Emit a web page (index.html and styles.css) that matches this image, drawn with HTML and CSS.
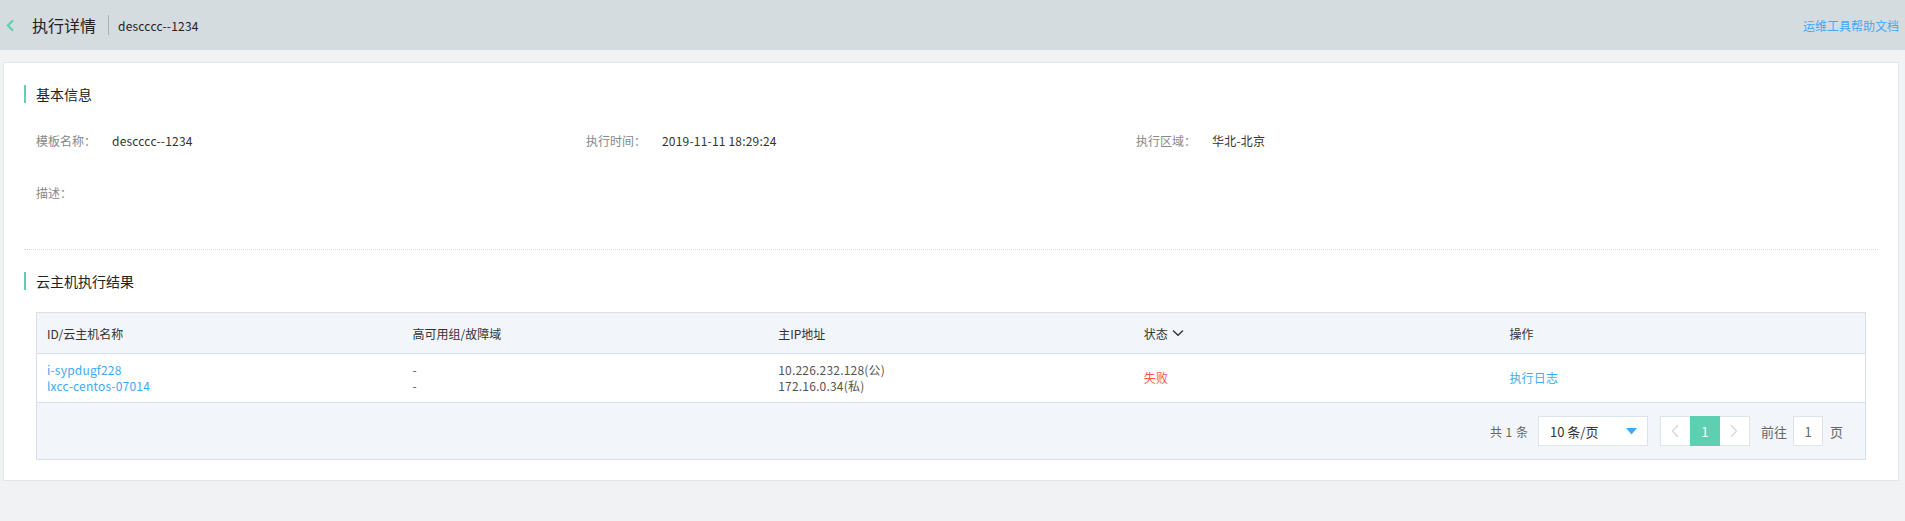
FILE: index.html
```html
<!DOCTYPE html>
<html lang="zh-CN">
<head>
<meta charset="utf-8">
<title>执行详情</title>
<link rel="stylesheet" href="styles.css">
</head>
<body>
<header class="topbar">
  <div class="topbar-left">
    <svg class="back" width="9" height="13" viewBox="0 0 9 13"><path d="M7 1.2 L2 6.5 L7 11.8" fill="none" stroke="#5dd0b2" stroke-width="2.2"/></svg>
    <h1 class="title">执行详情</h1>
    <span class="sep"></span>
    <span class="sub">descccc--1234</span>
  </div>
  <a class="help">运维工具帮助文档</a>
</header>

<main class="card">
  <div class="sec-title">基本信息</div>
  <div class="info-grid">
    <div class="info-item"><span class="info-label">模板名称：</span><span class="info-value">descccc--1234</span></div>
    <div class="info-item"><span class="info-label">执行时间：</span><span class="info-value">2019-11-11 18:29:24</span></div>
    <div class="info-item"><span class="info-label">执行区域：</span><span class="info-value">华北-北京</span></div>
    <div class="info-item"><span class="info-label">描述：</span><span class="info-value"></span></div>
  </div>
  <div class="divider"></div>
  <div class="sec-title sec-title-2">云主机执行结果</div>
  <div class="table-wrap">
    <table class="grid">
      <thead>
        <tr>
          <th>ID/云主机名称</th>
          <th>高可用组/故障域</th>
          <th>主IP地址</th>
          <th><span class="th-sort">状态<svg width="12" height="8" viewBox="0 0 12 8"><path d="M1 1.5 L6 6.3 L11 1.5" fill="none" stroke="#333" stroke-width="1.3"/></svg></span></th>
          <th>操作</th>
        </tr>
      </thead>
      <tbody>
        <tr>
          <td><a class="link">i-sypdugf228</a><br><a class="link">lxcc-centos-07014</a></td>
          <td class="muted">-<br>-</td>
          <td class="muted">10.226.232.128(公)<br>172.16.0.34(私)</td>
          <td><span class="fail">失败</span></td>
          <td><a class="link">执行日志</a></td>
        </tr>
      </tbody>
    </table>
    <div class="pager-bar">
      <span class="total">共 1 条</span>
      <div class="size-select"><span>10 条/页</span><svg width="11" height="7" viewBox="0 0 11 7"><path d="M0 0 H11 L5.5 6.5 Z" fill="#3fa9f5"/></svg></div>
      <div class="pager">
        <span class="pg-btn"><svg width="8" height="14" viewBox="0 0 8 14"><path d="M7 1 L1.5 7 L7 13" fill="none" stroke="#d3d7dc" stroke-width="1.2"/></svg></span>
        <span class="pg-btn pg-active">1</span>
        <span class="pg-btn"><svg width="8" height="14" viewBox="0 0 8 14"><path d="M1 1 L6.5 7 L1 13" fill="none" stroke="#d3d7dc" stroke-width="1.2"/></svg></span>
      </div>
      <span class="goto">前往</span>
      <span class="goto-input">1</span>
      <span class="goto-unit">页</span>
    </div>
  </div>
</main>
</body>
</html>
```

FILE: styles.css
```css
html {
  background: #f1f2f4;
}
body {
  margin: 0;
  font-family: "Noto Sans CJK SC", "Noto Sans", sans-serif;
  font-size: 12px;
  color: #333;
  background: #f1f2f4;
}
a { text-decoration: none; }

.topbar {
  height: 50px;
  background: #d5dce0;
  display: flex;
  align-items: center;
  justify-content: space-between;
  padding: 0 6px;
}
.topbar-left {
  display: flex;
  align-items: center;
}
.back { display: block; }
.title {
  margin: 0 0 0 17px;
  font-size: 16px;
  font-weight: normal;
  line-height: 20px;
  color: #222;
}
.sep {
  width: 1px;
  height: 20px;
  background: #a9b1b6;
  margin-left: 12px;
}
.sub {
  margin-left: 9px;
  font-size: 12px;
  letter-spacing: 0.2px;
  color: #222;
}
.help {
  color: #3fa9f5;
  font-size: 12px;
}

.card {
  margin: 12px 6px 0 3px;
  background: #fff;
  border: 1px solid #e1e6eb;
  padding: 22px 20px 20px;
}
.sec-title {
  display: flex;
  align-items: center;
  height: 18px;
  line-height: 18px;
  font-size: 14px;
  color: #222;
}
.sec-title::before {
  content: "";
  width: 2px;
  height: 18px;
  background: #5dd0b2;
  margin-right: 10px;
}
.info-grid {
  margin-top: 28px;
  padding-left: 12px;
  display: grid;
  grid-template-columns: 550px 550px 1fr;
  row-gap: 32px;
}
.info-item {
  display: flex;
  line-height: 20px;
  height: 20px;
}
.info-label {
  width: 76px;
  color: #888;
}
.info-value {
  color: #333;
  letter-spacing: 0.2px;
}
.divider {
  margin-top: 46px;
  border-top: 1px dotted #d6dadf;
}
.sec-title-2 {
  margin-top: 22px;
}

.table-wrap {
  margin: 22px 12px 0;
  border: 1px solid #d8e0e8;
}
.grid {
  width: 100%;
  border-collapse: collapse;
  table-layout: fixed;
}
.grid th {
  height: 40px;
  padding: 0 10px;
  text-align: left;
  font-weight: normal;
  color: #333;
  background: #f2f5f9;
  border-bottom: 1px solid #d8e0e8;
}
.th-sort {
  display: inline-flex;
  align-items: center;
  gap: 4px;
}
.grid td {
  height: 48px;
  padding: 0 10px;
  line-height: 16px;
  border-bottom: 1px solid #d8e0e8;
  vertical-align: middle;
  letter-spacing: 0.2px;
}
.link { color: #3fa9f5; }
.muted { color: #555; }
.fail { color: #f5574a; }

.pager-bar {
  background: #f2f5f9;
  display: flex;
  justify-content: flex-end;
  align-items: center;
  padding: 13px 22px 13px;
  color: #666;
}
.total {
  margin-right: 10px;
  word-spacing: 1px;
}
.size-select {
  width: 110px;
  height: 30px;
  box-sizing: border-box;
  background: #fff;
  border: 1px solid #dde3ea;
  display: flex;
  align-items: center;
  justify-content: space-between;
  padding: 0 10px 0 11px;
  font-size: 13px;
  color: #333;
}
.pager {
  margin-left: 12px;
  display: flex;
  height: 30px;
  box-sizing: border-box;
  border: 1px solid #dde3ea;
  background: #fff;
}
.pg-btn {
  width: 29px;
  height: 28px;
  display: flex;
  align-items: center;
  justify-content: center;
  font-size: 13px;
}
.pg-active {
  width: 30px;
  height: 30px;
  margin-top: -1px;
  background: #5dd0b2;
  color: #fff;
}
.goto {
  margin-left: 11px;
  font-size: 13px;
}
.goto-input {
  margin-left: 6px;
  width: 30px;
  height: 30px;
  box-sizing: border-box;
  border: 1px solid #dde3ea;
  background: #fff;
  display: flex;
  align-items: center;
  justify-content: center;
  font-size: 13px;
  color: #666;
}
.goto-unit {
  margin-left: 7px;
  font-size: 13px;
}
```
